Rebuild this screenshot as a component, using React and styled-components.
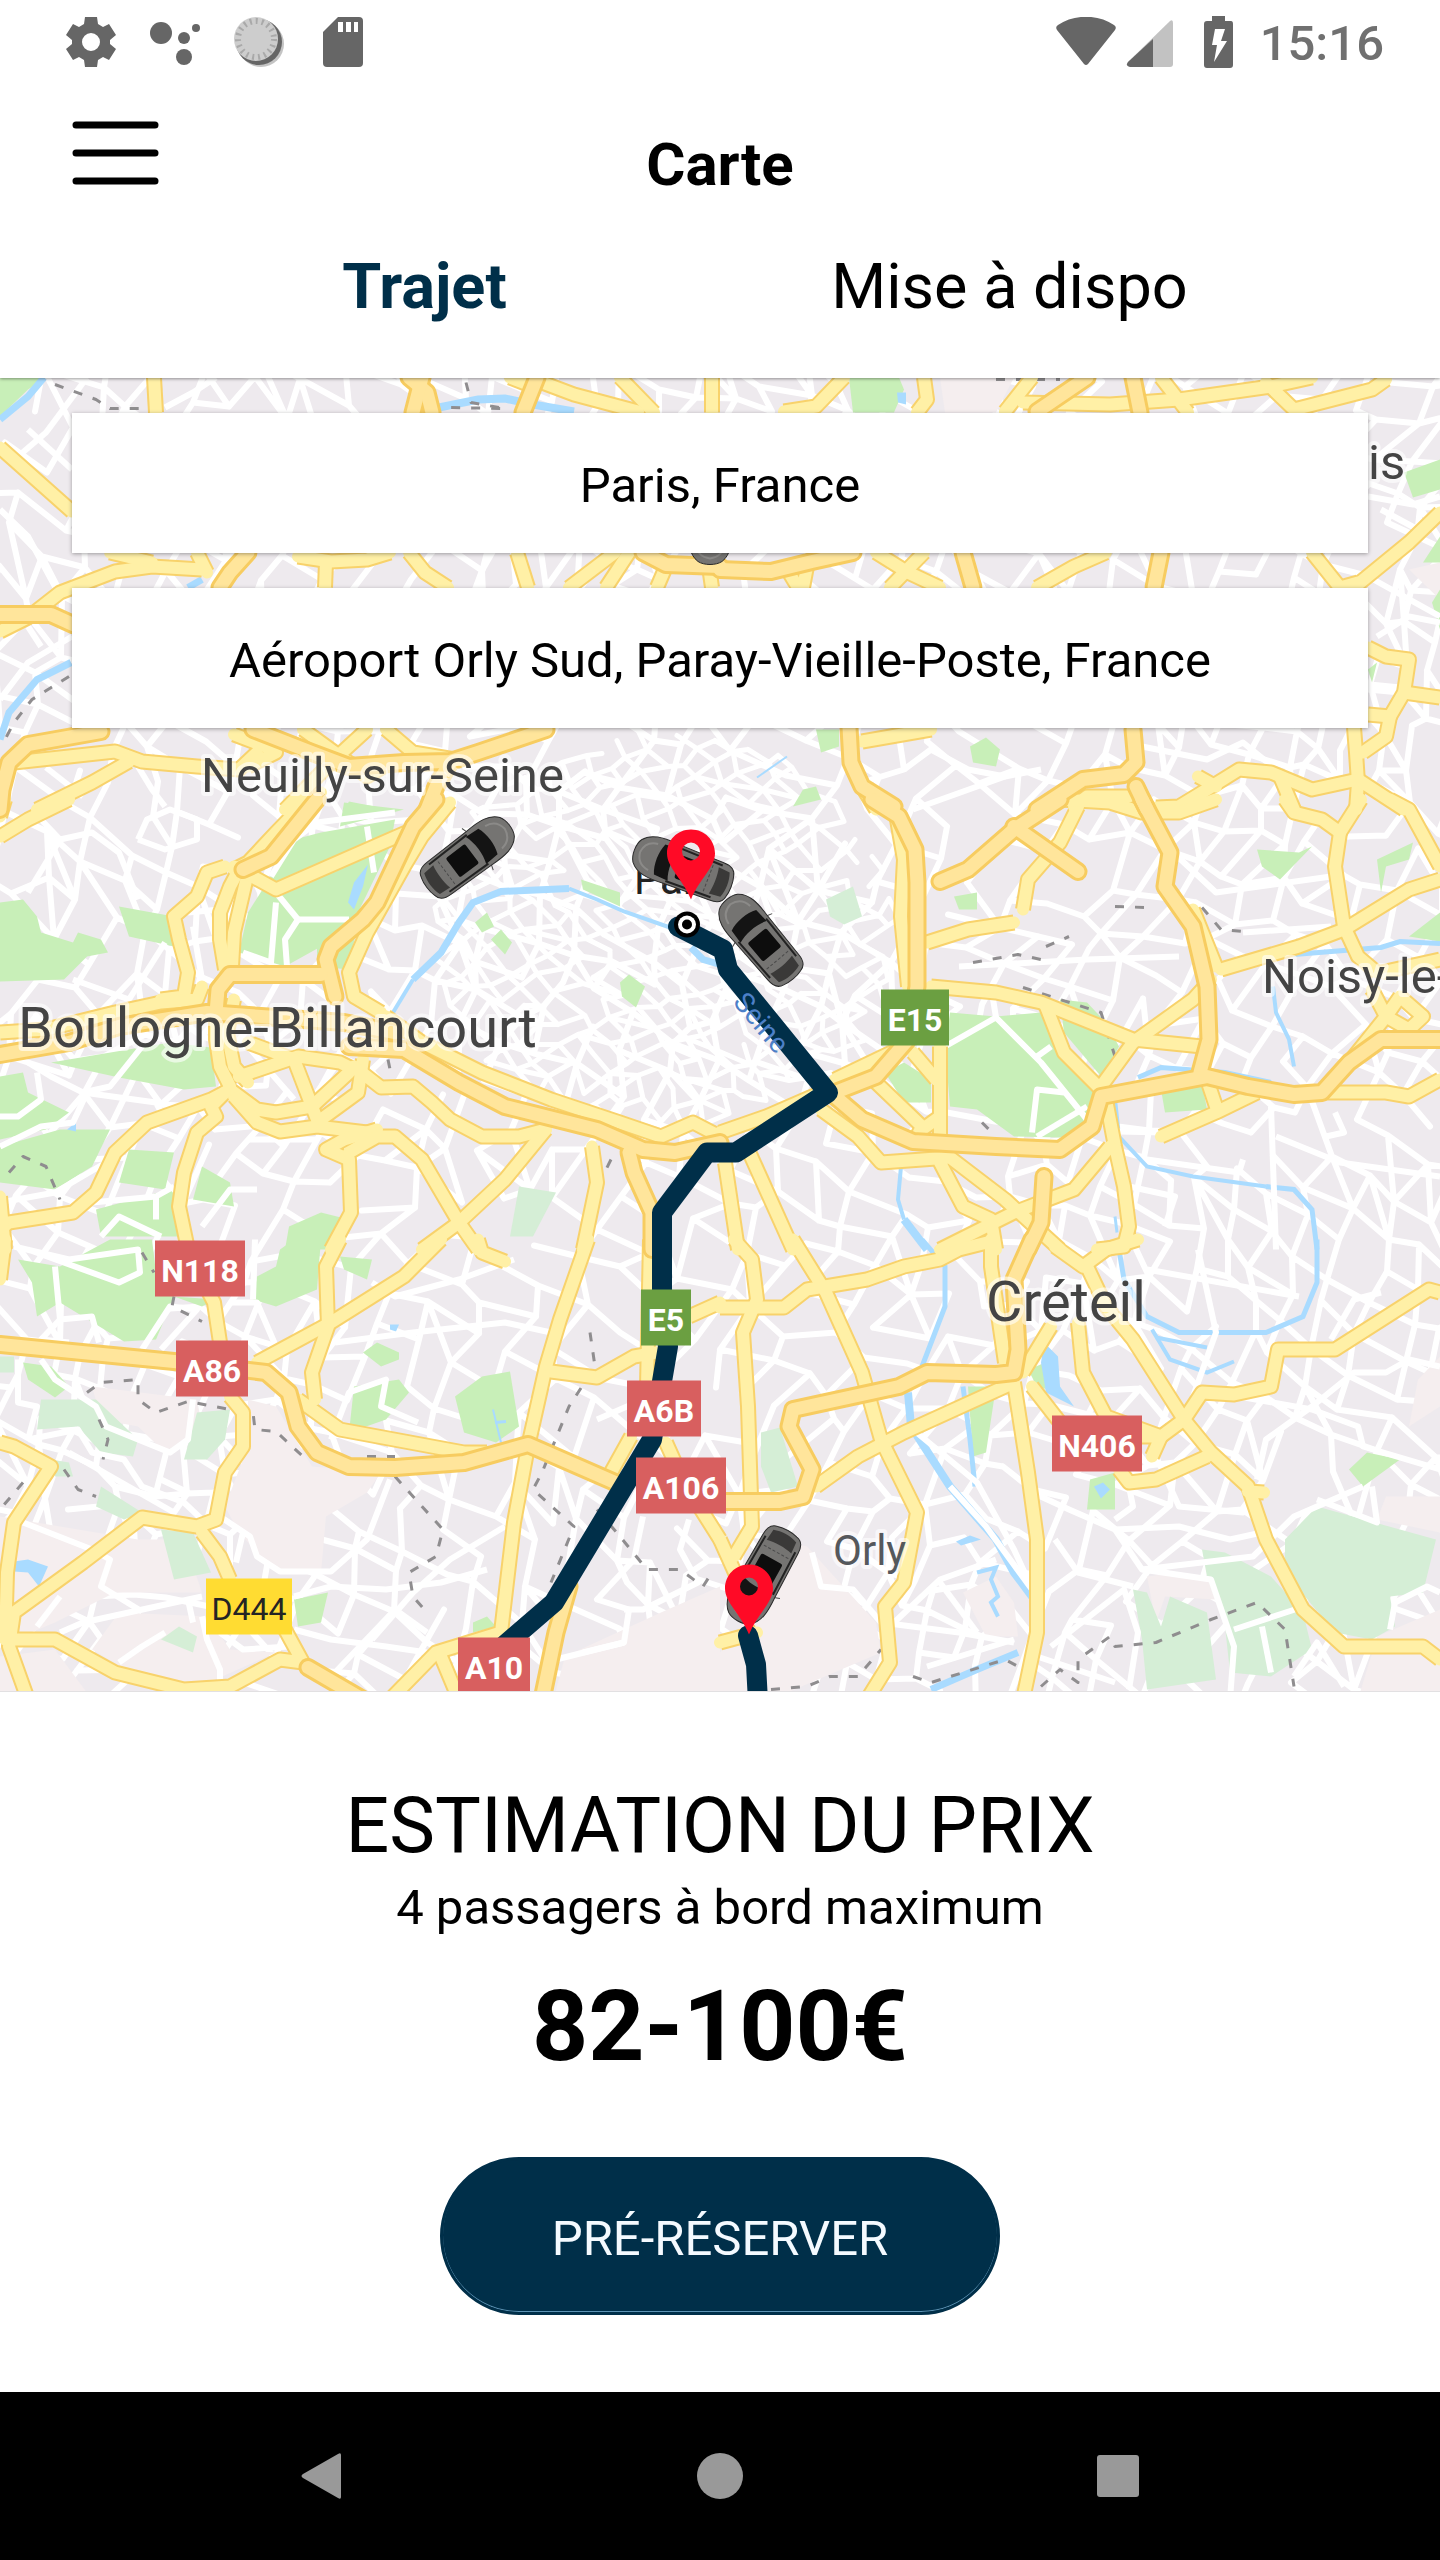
import React, { useState } from "react";
import styled, { createGlobalStyle } from "styled-components";

const NAVY = "#002f49";

// The map is cut in six tiles, every tile has its own origin and its own drawing units
const TILE_SCALE_X = 720 / 1568;
const TILE_SCALE_Y = 1 / 3;

const tiles = [
    {
        x: 0,
        y: 370,
        zones: [],
        parks: ["0,24 100,24 60,60 0,140", "760,1295 850,1320 750,1320"],
        meadows: [],
        lakes: [],
        rivers: [
            { w: 8, d: "955,115 1040,90 1100,88 1160,105 1250,125" },
            { w: 7, d: "95,24 60,80 0,150" },
            { w: 7, d: "155,880 80,930 20,1030 0,1110" },
            { w: 7, d: "440,630 410,655" },
        ],
        rails: [
            "120,45 210,90 240,118 330,118",
            "1015,40 1025,100 1100,118 970,115",
            "150,920 70,990 30,1060 10,1110",
        ],
        streets: [
            "360,115 420,70 470,24",
            "190,24 100,190 40,260",
            "0,420 60,500 120,650",
            "60,180 156,300",
            "0,990 60,880 156,800",
            "60,770 90,830",
            "1040,655 1060,550",
            "300,1190 330,1260 360,1310",
            "100,1195 180,1280",
        ],
        roads: [
            "335,24 340,130",
            "0,235 156,425",
            "0,785 60,745 130,670 250,605 330,590 440,600",
            "240,550 330,580",
            "430,550 450,610",
            "650,560 720,575 800,570 850,550",
            "710,580 708,655",
            "890,550 925,610 975,655",
            "1125,550 1150,655",
            "1340,550 1240,655",
            "1370,550 1320,655",
            "1450,590 1430,655",
            "1545,590 1550,655",
            "1110,24 1150,45",
            "1180,40 1250,75 1390,125",
            "1350,24 1425,128",
            "1550,24 1550,128",
            "30,1180 150,1160 250,1145 310,1175 430,1190 520,1200 560,1150",
            "80,1320 200,1240 280,1175",
            "510,1095 580,1130 600,1150 540,1190",
            "660,1080 770,1190",
            "800,1080 720,1180 620,1320",
            "700,1270 670,1320",
            "840,1080 900,1150 990,1170",
            "850,1180 800,1220 760,1180",
        ],
        motorways: [
            "0,735 110,735 160,765",
            "540,550 500,610 480,655",
            "1400,550 1450,585 1568,590",
            "890,24 930,70 940,128",
            "920,24 900,128",
            "1170,24 1140,128",
            "220,1085 60,1125 20,1180 5,1260 0,1320",
            "550,1080 680,1150 760,1190 880,1180 980,1175 1040,1150 1190,1080",
            "980,1180 950,1250 930,1320",
        ],
    },
    {
        x: 720,
        y: 370,
        zones: ["480,24 640,24 600,128 490,128", "1500,600 1568,580 1568,690"],
        parks: [
            "280,24 390,24 400,60 380,128 290,128",
            "1490,310 1568,270 1568,360 1510,385",
            "1530,580 1568,500 1568,580",
            "1411,900 1430,880 1420,940",
            "1550,700 1568,660 1568,780",
            "210,1080 260,1080 260,1130 220,1150",
            "545,1130 580,1105 610,1140 600,1190 550,1180",
            "160,1310 180,1260 210,1250 220,1290",
        ],
        meadows: [],
        lakes: ["385,70 405,70 405,105 388,100"],
        rivers: [{ w: 2, d: "80,1225 145,1160" }],
        rails: ["600,30 740,30"],
        streets: [
            "1411,380 1510,405 1568,380",
            "1411,960 1480,970",
            "1440,420 1520,480",
            "1411,620 1568,740",
            "1430,800 1500,740 1568,760",
            "390,1100 400,1200 310,1240",
            "400,1200 460,1140 540,1200 620,1220 700,1200",
            "620,1220 420,1320",
            "920,1130 1060,1170 1140,1120 1210,1200",
        ],
        roads: [
            "270,24 210,110 140,125",
            "445,24 450,90 430,128",
            "680,24 620,125",
            "660,100 850,105 1000,90 1200,50 1290,24",
            "960,24 1020,128",
            "1190,40 1250,120 1420,60 1450,30",
            "1568,430 1500,520 1380,655",
            "1290,550 1350,655 1390,640",
            "1411,835 1450,860 1500,870 1490,970 1460,1040 1411,1035",
            "1490,970 1568,985",
            "1460,1040 1450,1100 1400,1150",
            "1380,1075 1385,1150 1390,1240 1385,1320",
            "150,610 170,655",
            "190,590 180,655",
            "340,550 410,610 480,655",
            "445,550 370,655",
            "840,550 770,590 690,655",
            "310,1115 460,1080",
            "290,1200 310,1250 340,1320",
            "770,1310 800,1280 890,1280",
            "950,1315 1000,1310 1050,1270 1130,1200 1200,1210 1290,1260 1390,1230 1490,1320",
            "1040,1220 1080,1250",
            "1220,1220 1250,1320",
        ],
        motorways: [
            "800,24 690,125",
            "900,24 915,128",
            "0,600 110,605 200,575 290,550",
            "530,550 550,655",
            "960,550 945,655",
            "280,1075 285,1180 310,1250 380,1310",
            "900,1080 905,1180 880,1215 790,1230 690,1320",
            "905,1250 930,1320",
        ],
    },
    {
        x: 0,
        y: 800,
        zones: [],
        parks: [
            "0,310 50,300 80,350 90,400 160,430 170,400 220,420 235,460 190,470 140,540 0,545",
            "260,320 380,350 380,440 280,410",
            "540,340 640,120 700,100 860,60 850,140 780,340 700,440 620,500 520,460",
            "690,400 780,360 760,510 690,500",
            "750,10 880,30 740,80",
            "110,790 370,730 460,745 470,860 400,870 260,835",
            "0,830 50,820 60,880 150,940 100,990 0,1020",
            "0,1040 130,990 240,990 200,1100 120,1170 0,1150",
            "260,1150 280,1050 380,1060 360,1170",
            "440,1100 500,1150 510,1220 420,1200",
            "210,1230 370,1170 390,1200 400,1310 220,1310",
            "1265,240 1350,280 1350,320 1270,270",
            "1035,370 1060,340 1075,380 1050,400",
            "1070,420 1090,390 1115,430 1100,465",
            "1350,550 1370,525 1405,560 1385,625 1355,590",
            "620,1350 630,1280 700,1240 760,1260 740,1350",
        ],
        meadows: ["1130,1160 1210,1180 1160,1310 1110,1310"],
        lakes: ["757,310 770,250 802,195 790,260 770,330", "145,990 165,970 165,995"],
        rivers: [
            { w: 4, d: "855,640 900,540" },
            { w: 7, d: "900,540 960,460 1000,370 1030,310 1090,275 1240,268" },
            { w: 4, d: "1240,268 1300,300 1360,335 1460,385" },
            { w: 7, d: "1505,445 1530,480 1568,495" },
        ],
        rails: ["20,1120 50,1070 100,1100 130,1200", "845,780 850,810", "1330,1080 1320,1110"],
        streets: [
            "590,230 640,120 690,70 860,40",
            "600,280 650,360 620,420 625,500",
            "650,360 760,360",
            "800,80 815,220",
            "530,460 590,490 600,310",
            "160,540 280,600 360,430",
            "60,790 110,830 180,880 240,860 310,740",
            "180,880 340,910 360,960",
            "0,950 40,950 90,900 80,820",
            "0,1040 90,980 160,970 190,880",
            "0,1210 120,1180 230,1090",
            "200,1210 340,1190 380,1160",
            "340,1190 340,1260",
            "220,1310 260,1250 350,1310",
            "440,1280 500,1170 560,1170",
            "540,1020 690,1020",
            "540,740 640,900",
            "740,780 690,880",
            "410,340 480,330",
            "420,380 440,540",
            "60,280 130,120 90,60",
            "130,120 200,100 260,160 300,300",
            "300,120 320,60 370,30 430,60 430,120 360,150 300,120",
        ],
        roads: [
            "0,110 60,60 150,0",
            "0,50 10,0",
            "670,0 600,100 540,190 510,210",
            "520,210 500,260 480,340 480,420 490,510",
            "540,220 510,400 505,500",
            "490,200 450,220 430,290 380,350 390,420 410,520 400,590 350,600",
            "510,200 600,270 850,120 900,90",
            "980,10 920,110 880,200 800,400 760,520 770,590 830,640",
            "440,560 430,600 350,610 250,640 100,690 0,700",
            "470,640 470,720 480,800 500,860",
            "510,600 495,700 510,800 540,850",
            "520,830 650,770 740,790 770,810",
            "500,870 560,930 600,940 680,920 760,820",
            "510,890 560,970 610,995 690,980 800,1000",
            "640,780 690,960",
            "540,730 640,780",
            "790,780 780,880 700,960",
            "840,650 920,730 1050,820 1200,900 1350,970 1440,1010 1510,970 1568,1010",
            "770,800 830,865 900,860 940,910 980,960 1050,1010 1130,1010 1190,990",
            "1190,990 1100,1140 1000,1270 920,1350",
            "820,990 750,1020 710,1050 760,1080 765,1240 720,1350",
            "760,1060 820,1010 860,1010 920,1080 1000,1270 1040,1350",
            "500,870 460,900 320,970 250,1060 210,1180 160,1240 20,1270 0,1290",
            "490,880 460,920 470,950 430,1000 400,1120 390,1220 410,1350",
            "0,1190 10,1350",
            "1290,1040 1300,1150 1270,1350",
        ],
        motorways: [
            "690,0 590,170 530,210",
            "950,0 900,80 820,310 790,360 720,440 710,480 730,590",
            "470,640 475,570 500,525 700,525",
            "0,765 150,730 260,680 450,640 600,655 750,670 860,700",
            "760,740 880,750 1000,850 1100,920 1300,990 1400,1050 1470,1060 1568,1030",
            "1370,1060 1380,1120 1420,1240 1420,1350",
        ],
    },
    {
        x: 720,
        y: 800,
        zones: [],
        parks: [
            "500,640 600,650 700,640 750,760 830,880 800,980 740,1015 640,1010 560,930 500,920 490,740",
            "360,820 400,790 460,840 460,910 400,910",
            "740,600 800,610 840,670 870,740 830,830 750,700",
            "510,290 560,280 560,330 520,330",
            "1170,150 1260,160 1290,140 1220,240 1180,200",
            "1430,180 1510,130 1500,180 1450,200 1440,280",
            "1500,410 1568,340 1568,425",
            "960,870 1050,850 1060,930 970,940",
        ],
        meadows: ["230,300 290,260 310,350 270,375 240,350"],
        lakes: [],
        rivers: [
            { w: 5, d: "1250,465 1440,445 1480,425 1568,432" },
            { w: 5, d: "910,835 960,805 1100,820 1200,850" },
            { w: 4, d: "1205,560 1210,640 1240,720 1250,800" },
            { w: 4, d: "860,900 870,1010 930,1100 1030,1130 1190,1160" },
            { w: 5, d: "1190,1160 1250,1170 1290,1230 1300,1350" },
            { w: 4, d: "395,1100 388,1200 400,1260" },
            { w: 8, d: "400,1260 450,1350" },
            { w: 3, d: "860,1250 865,1300" },
        ],
        rails: [
            "860,320 930,325",
            "1050,325 1090,390 1140,395",
            "660,565 740,600 830,640 860,770 830,840",
            "710,440 760,410",
            "550,490 650,465 700,480",
            "570,970 600,1010",
        ],
        streets: [
            "490,740 600,655 700,790 800,960",
            "600,655 590,560",
            "690,770 720,740",
            "680,1000 690,870 750,880",
            "690,1010 800,920",
            "870,995 970,1000",
            "930,1080 1130,1120 1140,1080",
            "1200,920 1210,1350",
            "1340,940 1360,1000 1320,1010",
            "980,150 1080,280 1330,230",
            "1140,400 1330,380",
            "520,500 800,480 1000,470",
            "1210,1010 1350,1090 1568,1130",
            "890,1160 990,1190 970,1280",
        ],
        roads: [
            "385,60 400,180 395,350 410,560",
            "780,20 740,130 670,240 660,330",
            "450,430 540,390 640,370",
            "740,0 850,10 920,40 1000,40 1080,0",
            "1230,0 1250,40 1310,60 1350,100 1395,0",
            "1350,100 1340,200 1360,380 1390,470 1430,520",
            "1460,0 1500,30 1568,200",
            "1090,510 1260,440 1360,390 1500,270 1568,240",
            "460,560 600,580 700,610 900,720 1050,740",
            "1070,540 1030,600 900,730 830,860",
            "1030,330 1080,500",
            "710,620 750,760 830,870",
            "1300,880 1450,880 1500,890 1568,840",
            "480,740 480,1010",
            "420,760 470,840",
            "340,850 440,980 430,1010",
            "440,990 480,950",
            "250,840 400,740",
            "840,900 860,1040 880,1160 890,1280 880,1340 820,1350",
            "850,1040 770,1170 640,1240 480,1350",
            "220,930 300,1010 350,1090 500,1075 620,1200 740,1350",
            "480,1090 530,1220 590,1260 600,1350",
            "1060,840 1080,920",
            "960,1010 1080,940 1170,880",
            "0,1000 100,950 250,860",
            "10,1090 40,1350",
            "60,1050 160,1350",
            "1370,790 1450,650 1420,570",
            "1480,590 1450,650 1500,690 1530,650 1480,590",
            "1440,520 1568,480",
        ],
        motorways: [
            "330,0 390,50 425,150 430,250 430,560 410,720 340,830 250,880",
            "740,0 640,90 540,210 480,245",
            "640,80 780,215",
            "920,0 980,160 970,260 1030,380 1060,560 1065,720 1045,820",
            "1568,720 1440,720 1370,790 1310,880 1250,885 1150,860 1060,830 830,890 810,980 740,1050 600,1040 420,1025 310,960 250,890",
            "705,1130 700,1270 670,1350",
        ],
    },
    {
        x: 0,
        y: 1240,
        zones: [
            "540,480 600,500 680,680 830,700 800,760 710,830 700,1000 600,1000 520,880 490,800 540,620",
            "0,830 300,900 400,900 440,1060 250,1060 120,1150 30,1200 0,1200",
            "200,440 430,480 440,560 360,640 300,560 220,540",
            "260,1120 450,1130 500,1230 600,1240 420,1350 300,1310 200,1230",
            "0,1250 120,1230 200,1380 0,1380",
            "1210,1350 1230,1250 1440,1120 1568,1040 1568,1380 1210,1380",
        ],
        parks: [
            "40,60 130,80 240,0 330,0 340,100 380,170 340,300 270,305 130,190 80,230 70,130",
            "610,30 640,0 700,0 690,150 600,200 550,180 560,110 600,80",
            "740,50 810,60 800,120 750,90",
            "790,340 820,310 870,340 870,360 830,380",
            "770,440 870,420 890,460 840,540 760,580",
            "990,470 1050,410 1110,395 1130,560 1080,610 1010,580",
            "50,370 110,380 150,440 120,475 60,420",
            "640,1080 715,1060 700,1150 650,1160",
            "1030,1150 1060,1130 1080,1160 1030,1180",
            "380,170 470,180 440,200",
        ],
        meadows: [
            "0,350 30,350 30,400 0,400",
            "90,480 210,480 300,600 290,650 220,640 170,560 80,570",
            "430,520 500,510 490,600 450,660 400,660",
            "220,740 310,820 270,840 210,800",
            "350,870 420,880 460,1000 380,1020",
            "350,1200 390,1160 430,1190 420,1240",
            "110,660 150,670 160,710 120,710",
        ],
        lakes: ["30,965 60,960 105,980 85,1040 60,1000 30,995", "850,255 868,255 862,275 850,270"],
        rivers: [
            { w: 2, d: "1073,510 1090,610" },
            { w: 3, d: "1078,548 1102,545" },
        ],
        rails: [
            "310,40 335,100",
            "380,170 375,200 440,245",
            "190,460 220,430 300,420 300,480 340,520 410,485 500,510 550,520 555,570 600,575 660,650",
            "215,540 235,600 225,660",
            "140,690 170,750 210,770",
            "50,730 0,810",
            "800,650 860,650",
            "860,710 920,800 965,870 950,950 890,1000 900,1070 930,1120",
            "1285,280 1295,380 1240,500 1180,700 1160,750 1250,860 1200,1030",
            "1300,810 1350,890 1410,990 1480,990 1530,1040 1550,1000",
        ],
        streets: [
            "30,20 150,60 300,30 305,100 260,130 60,30",
            "120,80 130,240 200,230 215,310",
            "130,240 90,300 150,310",
            "90,360 120,420 210,500 230,560 300,600 370,640 410,600 420,480",
            "60,600 170,570 200,640 270,660 310,740 400,790 440,840",
            "150,640 380,820 410,760 350,720",
            "40,360 40,490 80,500 60,600",
            "50,850 200,930 240,960 220,1040 310,1115",
            "80,1160 130,1070",
            "130,1180 180,1150 440,1070",
            "310,330 370,200 430,210 350,330",
            "500,190 560,190 600,320",
            "555,0 550,180",
            "480,830 545,890 560,950 610,995 720,995 800,900 850,720",
            "515,970 530,880",
            "640,1070 720,1040 840,1050 960,1030 1060,990",
            "440,1130 450,1200 480,1290 480,1350",
            "480,1180 530,1230 630,1220",
            "260,1270 310,1220 360,1180",
            "410,1080 420,1150",
            "810,1200 900,1060 980,960 1100,860",
            "640,1170 720,1200 840,1220 930,1240",
            "730,1300 860,1110 930,1180",
            "1300,540 1400,480",
            "1400,830 1380,960 1300,1080 1370,1110 1360,1210 1270,1240",
            "1500,840 1480,930 1520,1030 1400,1110 1360,1110",
            "1210,1260 1360,1210",
            "720,600 760,460 840,420 830,500 910,550",
            "730,310 900,280 1100,250 1200,280",
            "810,130 860,170 1000,120 1120,60",
        ],
        roads: [
            "0,120 10,0",
            "440,120 465,190 480,310",
            "560,370 720,250 880,110 960,0",
            "740,0 710,80 715,260 680,400 685,480",
            "650,480 740,570 1010,640 1060,640",
            "1040,0 1050,40 1100,65",
            "1280,0 1220,240 1190,380 1150,620 1120,850 1090,1180 950,1240 850,1380",
            "1200,395 1300,415 1380,350 1430,340",
            "1415,0 1410,440",
            "1568,190 1500,230",
            "1375,590 1330,700",
            "500,470 530,520 530,620 490,700 470,840 430,860 310,835 180,970 30,1120 20,1220 60,1380",
            "0,610 30,620 110,680 30,850 15,1000 10,1200",
            "440,880 480,950 500,1020",
            "20,1200 120,1200 250,1300 400,1350 500,1340 610,1260 660,1270 620,1170",
            "960,1250 1000,1380",
            "1450,610 1490,730 1568,900",
        ],
        motorways: [
            "0,315 380,365 580,400 630,460 650,560 690,640 760,680 860,685 1010,670 1150,615 1340,730",
            "670,1285 790,1380",
            "1240,1040 1210,1180 1180,1380",
        ],
    },
    {
        x: 720,
        y: 1240,
        zones: [
            "130,900 190,920 340,1150 350,1240 110,1380 0,1380 0,1240 80,1100",
            "530,1060 600,1010 640,1090 650,1190 580,1190",
            "930,1010 1000,1000 1070,1020 1080,1080 970,1070 950,1150",
            "1450,770 1568,770 1568,880 1430,840",
            "1520,420 1568,350 1568,500 1500,560",
            "1430,1190 1568,1110 1568,1380 1390,1380",
        ],
        parks: [
            "540,440 600,440 580,640 550,650",
            "670,390 710,370 740,460 690,440",
            "805,720 860,700 860,810 800,810",
            "1370,690 1410,640 1480,660 1400,740",
        ],
        meadows: [
            "90,580 130,565 170,740 110,760 90,680",
            "1230,900 1300,800 1560,900 1530,1060 1460,1070 1470,1160 1420,1200 1340,1180 1230,1000",
            "1050,930 1100,940 1200,1010 1270,1120 1290,1230 1200,1310 1110,1300 1100,1160 1060,1010",
            "900,1050 930,1060 960,1160 980,1070 1060,1120 1080,1320 930,1350 920,1200",
        ],
        lakes: [
            "705,310 735,350 740,440 772,502 710,460 700,370",
            "815,740 835,730 850,750 830,778",
            "515,905 545,888 568,900 525,918",
        ],
        rivers: [
            { w: 5, d: "440,0 490,80 490,200 440,380" },
            { w: 8, d: "410,460 415,560 500,740 600,900 640,1000 680,1070" },
            { w: 5, d: "870,30 880,120 930,230 1000,280 1190,280 1270,230 1300,130 1300,0" },
            { w: 4, d: "950,295 1060,325" },
            { w: 4, d: "940,270 980,360 1060,400 1120,365" },
            { w: 5, d: "530,440 545,600 555,740" },
            { w: 4, d: "560,1000 600,985 590,1020 605,1070 590,1090 605,1130" },
            { w: 7, d: "650,1240 560,1290 460,1350" },
        ],
        rails: [
            "110,1350 190,1340 240,1310 300,1310 350,1230",
            "420,1310 460,1330 620,1260 650,1280",
            "700,1340 740,1290 780,1330 780,1260 850,1190 860,1220 950,1210 1070,1140 1170,1090 1230,1170 1250,1340",
        ],
        streets: [
            "680,760 760,810 860,870 920,990 1070,1020 1120,1220 1110,1380",
            "860,870 1000,860 1110,900 1180,880",
            "920,990 1160,950 1250,830 1400,740",
            "1120,1170 1265,1105",
            "1180,1160 1200,1300",
            "720,1220 880,1050 910,1180 890,1350",
            "1170,720 1190,600 1290,500 1380,400 1450,400 1500,360 1568,380",
            "1130,470 1290,510 1390,560 1400,620 1568,690",
            "500,740 580,860 680,1050",
            "420,570 560,730 640,930 690,1080",
            "200,940 220,1040 290,1050 350,1150 520,1180 640,1210",
            "380,1150 480,1020 600,960",
            "480,1030 560,1180",
            "450,1280 640,1200",
            "690,1250 860,1330",
            "1250,1310 1300,1210 1360,1340",
            "1460,1170 1470,1090 1540,1040 1568,1060",
            "1300,780 1430,850 1420,740",
            "1030,470 1080,280 1040,30",
            "930,90 1260,170",
            "1330,300 1380,180 1440,160",
            "950,650 1000,800 1140,820 1160,780",
            "730,900 780,1000 900,1040",
            "860,840 900,800 890,740",
        ],
        roads: [
            "30,0 70,60 80,180 50,280 60,500 70,860 30,950",
            "160,0 230,160 310,400 350,600 430,820 400,1030 360,1100 370,1270 320,1380",
            "0,205 140,205 190,150 320,120 400,80 480,60 520,30 590,5",
            "590,0 590,80 620,370",
            "730,20 790,80 840,30 910,0",
            "640,430 400,580 300,650 210,740",
            "720,260 660,400",
            "640,430 670,700 690,900 690,1180 660,1380",
            "800,80 840,200 900,300 1010,540 1070,640 1150,740 1190,900 1270,1110 1360,1220 1530,1220 1568,1260",
            "780,250 790,400 840,530 960,590 1010,540",
            "680,440 740,550",
            "870,690 890,730 950,720 1060,650",
            "1010,540 1050,460 1120,465 1200,440 1215,330 1340,330 1545,150 1568,160",
            "0,900 20,960 40,1020",
            "0,1210 80,1180",
            "1150,755 1185,760",
            "920,590 960,590 940,650",
        ],
        motorways: [
            "680,0 640,120 650,330 640,400 600,405 450,400 390,440 160,510 150,560 200,690 180,770 130,785 0,785",
        ],
    },
];

const cars = [
    { x: 468, y: 857, angle: -37 },
    { x: 683, y: 869, angle: 201 },
    { x: 760, y: 940, angle: 230 },
    { x: 763, y: 1576, angle: 119 },
    { x: 710, y: 513, angle: 90 },
];

const pins = [
    { x: 691, y: 854 },
    { x: 749, y: 1589 },
];

const places = [
    { name: "Neuilly-sur-Seine", x: 201, y: 792, size: 49 },
    { name: "Boulogne-Billancourt", x: 18, y: 1047, size: 56 },
    { name: "Noisy-le-", x: 1262, y: 993, size: 49 },
    { name: "is", x: 1368, y: 479, size: 49 },
    { name: "Créteil", x: 986, y: 1321, size: 56 },
    { name: "Orly", x: 833, y: 1565, size: 42, color: "#55585c" },
    { name: "Paris", x: 634, y: 894, size: 42, color: "#222222" },
];

const shields = [
    { name: "E15", x: 881, y: 990, width: 68, kind: "euro" },
    { name: "N118", x: 155, y: 1241, width: 90, kind: "main" },
    { name: "A86", x: 176, y: 1341, width: 72, kind: "main" },
    { name: "E5", x: 641, y: 1290, width: 50, kind: "euro" },
    { name: "A6B", x: 627, y: 1381, width: 74, kind: "main" },
    { name: "A106", x: 636, y: 1458, width: 90, kind: "main" },
    { name: "N406", x: 1052, y: 1416, width: 90, kind: "main" },
    { name: "D444", x: 206, y: 1579, width: 86, kind: "local" },
    { name: "A10", x: 458, y: 1638, width: 72, kind: "main" },
];

const shieldColors = {
    main: { background: "#d85f5f", text: "#ffffff" },
    euro: { background: "#6b9f41", text: "#ffffff" },
    local: { background: "#ffdc32", text: "#242424" },
};

const toPoints = (tile, points) =>
    points
        .split(" ")
        .map((pair) => {
            const [x, y] = pair.split(",").map(Number);
            return `${Math.round(tile.x + x * TILE_SCALE_X)},${Math.round(tile.y + y * TILE_SCALE_Y)}`;
        })
        .join(" ");

// small streets: a shaken lattice, turned by `turn` degrees around its centre
const buildStreets = ({ cx, cy, rx, ry, step, turn, keep, seed, round }) => {
    let state = seed;
    const random = () => {
        state = (state * 16807) % 2147483647;
        return state / 2147483647;
    };
    const cos = Math.cos((turn * Math.PI) / 180);
    const sin = Math.sin((turn * Math.PI) / 180);
    const reach = Math.ceil(Math.hypot(rx, ry) / step);
    const nodes = [];
    for (let row = -reach; row <= reach; row += 1) {
        const line = [];
        for (let col = -reach; col <= reach; col += 1) {
            const u = (col + (random() - 0.5) * 0.65) * step;
            const v = (row + (random() - 0.5) * 0.65) * step;
            // slow bends keep the lattice from looking ruled
            const bendX = Math.sin(v / 90) * 22 + Math.sin(u / 140) * 18;
            const bendY = Math.sin(u / 110) * 24;
            line.push([cx + u * cos - v * sin + bendX, cy + u * sin + v * cos + bendY]);
        }
        nodes.push(line);
    }
    const inside = ([x, y]) => {
        const dx = (x - cx) / rx;
        const dy = (y - cy) / ry;
        return round ? dx * dx + dy * dy < 1 : Math.abs(dx) < 1 && Math.abs(dy) < 1;
    };
    const parts = [];
    const join = (a, b, chance) => {
        if (random() < chance && inside(a) && inside(b)) {
            parts.push(`M${a.map(Math.round).join(" ")}L${b.map(Math.round).join(" ")}`);
        }
    };
    for (let row = 0; row < nodes.length - 1; row += 1) {
        for (let col = 0; col < nodes.length - 1; col += 1) {
            join(nodes[row][col], nodes[row][col + 1], keep);
            join(nodes[row][col], nodes[row + 1][col], keep);
            join(nodes[row][col], nodes[row + 1][col + 1], 0.12);
        }
    }
    return parts.join("");
};

const suburbStreets = buildStreets({ cx: 720, cy: 1035, rx: 760, ry: 690, step: 38, turn: 24, keep: 0.74, seed: 71 });
const cityStreets = buildStreets({ cx: 665, cy: 930, rx: 240, ry: 200, step: 21, turn: -33, keep: 0.84, seed: 12, round: true });

const TileLines = ({ layer, ...rest }) =>
    tiles.map((tile) =>
        tile[layer].map((points) => <polyline key={tile.x + points} points={toPoints(tile, points)} {...rest} />)
    );

const TileAreas = ({ layer, ...rest }) =>
    tiles.map((tile) =>
        tile[layer].map((points) => <polygon key={tile.x + points} points={toPoints(tile, points)} {...rest} />)
    );

const Car = ({ x, y, angle }) => (
    <g transform={`translate(${x} ${y}) rotate(${angle})`}>
        <path d="M14-20l-2-6M14 20l-2 6" stroke="#4a4a4a" strokeWidth="1" />
        <path
            d="M-50-11C-49-17-44-20-36-20L14-21C30-22 42-21 49-12C53-6 53 6 49 12C42 21 30 22 14 21L-36 20C-44 20-49 17-50 11C-52 5-52-5-50-11Z"
            fill="#757472"
            stroke="#2a2a2a"
            strokeWidth="1"
        />
        <path d="M-36-17L12-18M-36 17L12 18" stroke="#222222" strokeWidth="2" fill="none" />
        <path d="M10-17L25-16C29-7 29 7 25 16L10 17C14 7 14-7 10-17Z" fill="#141414" />
        <path d="M-45-13L-33-14C-35-6-35 6-33 14L-45 13C-48 5-48-5-45-13Z" fill="#3a3938" />
        <rect x="-19" y="-12" width="24" height="24" rx="2" fill="#0d0d0d" />
        <path d="M-27-14V14" stroke="#4a4a4a" strokeDasharray="3 2" fill="none" />
        <path d="M32-14C40-13 45-8 46 0C45 8 40 13 32 14" stroke="#8b8a88" strokeWidth="2" fill="none" />
    </g>
);

const Pin = ({ x, y }) => (
    <path
        transform={`translate(${x} ${y})`}
        fill="#ff0a26"
        fillRule="evenodd"
        d="M0-24C14-24 24-13 24 0C24 14 8 26 0 46C-8 26-24 14-24 0C-24-13-14-24 0-24ZM0-11A9 9 0 1 0 0 7A9 9 0 1 0 0-11Z"
    />
);

const Shield = ({ name, x, y, width, kind }) => (
    <g>
        <rect x={x} y={y} width={width} height="56" fill={shieldColors[kind].background} />
        <ShieldText x={x + width / 2} y={y + 41} fill={shieldColors[kind].text} $bold={kind !== "local"}>
            {name}
        </ShieldText>
    </g>
);

const RouteMap = () => (
    <MapDrawing viewBox="0 378 1440 1314" preserveAspectRatio="xMidYMid slice" role="img" aria-label="Carte du trajet">
        <rect y="300" width="1440" height="1500" fill="#eeeaee" />
        <path d={suburbStreets} stroke="#ffffff" strokeWidth="6" strokeLinecap="round" fill="none" />
        <path d={cityStreets} stroke="#ffffff" strokeWidth="5" strokeLinecap="round" fill="none" />
        <TileAreas layer="zones" fill="#f5eeef" />
        <TileAreas layer="parks" fill="#c8efb8" />
        <TileAreas layer="meadows" fill="#d5eed6" />
        <TileAreas layer="lakes" fill="#a9dbff" />
        {tiles.map((tile) =>
            tile.rivers.map(({ w, d }) => (
                <polyline key={tile.x + d} points={toPoints(tile, d)} fill="none" stroke="#a9dbff" strokeWidth={w} />
            ))
        )}
        <g fill="none" strokeLinejoin="round">
            <TileLines layer="streets" stroke="#ffffff" strokeWidth="6" />
            <TileLines layer="rails" stroke="#8f8d8f" strokeWidth="3" strokeDasharray="9 11" />
            <TileLines layer="roads" stroke="#f8d26b" strokeWidth="16" />
            <TileLines layer="roads" stroke="#fff0a6" strokeWidth="12" strokeLinecap="round" />
            <TileLines layer="motorways" stroke="#f7cc60" strokeWidth="19" strokeLinecap="round" />
            <TileLines layer="motorways" stroke="#ffe59b" strokeWidth="13" strokeLinecap="round" />
            <polyline
                points="678,927 723,950 728,970 828,1093 736,1153 707,1153 662,1213 662,1290 668,1347 652,1440 554,1603 496,1653"
                stroke={NAVY}
                strokeWidth="20"
                strokeLinecap="round"
            />
            <polyline points="748,1636 756,1665 759,1720" stroke={NAVY} strokeWidth="20" strokeLinecap="round" />
        </g>
        {places.map(({ name, x, y, size, color }) => (
            <PlaceName key={name} x={x} y={y} fontSize={size} fill={color || "#444444"}>
                {name}
            </PlaceName>
        ))}
        <RiverName transform="translate(732 1003) rotate(50)">Seine</RiverName>
        {shields.map((shield) => (
            <Shield key={shield.name} {...shield} />
        ))}
        <circle cx="687" cy="925" r="13" fill="#000000" />
        <circle cx="687" cy="925" r="9" fill="#ffffff" />
        <circle cx="687" cy="925" r="5" fill="#000000" />
        {cars.map((car) => (
            <Car key={car.x} {...car} />
        ))}
        {pins.map((pin) => (
            <Pin key={pin.x} {...pin} />
        ))}
    </MapDrawing>
);

const StatusIcons = () => (
    <StatusGroup $gap="34px">
        <svg width="50" height="50" viewBox="0 0 50 50" fill="#666666">
            <path
                fillRule="evenodd"
                d="M19 0H31L32 7L37 10L43 7L50 18L44 23V27L50 32L43 43L37 40L32 43L31 50H19L18 43L13 40L7 43L0 32L6 27V23L0 18L7 7L13 10L18 7ZM25 16A9 9 0 1 0 25 34A9 9 0 1 0 25 16Z"
            />
        </svg>
        <svg width="50" height="50" viewBox="0 0 50 50" fill="#666666">
            <circle cx="11" cy="16" r="11" />
            <circle cx="34" cy="21" r="6" />
            <circle cx="46" cy="11" r="4" />
            <circle cx="34" cy="40" r="8" />
        </svg>
        <svg width="50" height="50" viewBox="0 0 50 50">
            <circle cx="27" cy="27" r="23" fill="#c4c4c4" />
            <circle cx="25" cy="25" r="23" fill="#666666" />
            <circle cx="22" cy="22" r="22" fill="#cdcdcd" />
            <circle cx="22" cy="22" r="18" fill="none" stroke="#a9a9a9" strokeWidth="6" strokeDasharray="2 4" />
        </svg>
        <svg width="50" height="50" viewBox="0 0 50 50">
            <path d="M20 0H41Q45 0 45 4V46Q45 50 41 50H9Q5 50 5 46V15Z" fill="#666666" />
            <path d="M20 5h5v10h-5zM28 5h5v10h-5zM36 5h4v10h-4z" fill="#ffffff" />
        </svg>
    </StatusGroup>
);

const SignalIcons = () => (
    <StatusGroup $gap="10px">
        <svg width="60" height="50" viewBox="0 0 60 50" fill="#666666">
            <path d="M1 13Q-1 10 2 8C18-3 42-3 58 8Q61 10 59 13L32 47Q30 49 28 47Z" />
        </svg>
        <svg width="48" height="50" viewBox="0 0 48 50">
            <path d="M44 4Q47 2 47 6V47Q47 50 44 50H4Q-1 49 2 45Z" fill="#c2c2c2" />
            <path d="M27 22V50H4Q-1 49 2 45Z" fill="#666666" />
        </svg>
        <BatteryIcon width="30" height="52" viewBox="0 0 30 52">
            <path d="M8 0H21V5H27Q29 5 29 8V49Q29 52 26 52H3Q0 52 0 49V8Q0 5 3 5H8Z" fill="#666666" />
            <path d="M11 13H21L17 25H23L10 46L13 29H8Z" fill="#ffffff" />
        </BatteryIcon>
        <Clock>15:16</Clock>
    </StatusGroup>
);

const tabs = ["Trajet", "Mise à dispo"];

const App = () => {
    const [activeTab, setActiveTab] = useState(tabs[0]);
    const [departure, setDeparture] = useState("Paris, France");
    const [arrival, setArrival] = useState("Aéroport Orly Sud, Paray-Vieille-Poste, France");

    return (
        <>
            <GlobalStyle />
            <Screen>
                <Header>
                    <StatusBar>
                        <StatusIcons />
                        <SignalIcons />
                    </StatusBar>
                    <TitleBar>
                        <MenuButton type="button" aria-label="Menu">
                            <svg width="88" height="64" viewBox="0 0 88 64" stroke="#000000" strokeWidth="7" strokeLinecap="round">
                                <path d="M4 4H83M4 32H83M4 60H83" />
                            </svg>
                        </MenuButton>
                        <Title>Carte</Title>
                    </TitleBar>
                    <Tabs>
                        {tabs.map((tab) => (
                            <Tab key={tab} type="button" $active={tab === activeTab} onClick={() => setActiveTab(tab)}>
                                {tab}
                            </Tab>
                        ))}
                    </Tabs>
                </Header>
                <MapArea>
                    <RouteMap />
                    <AddressForm>
                        <AddressInput
                            aria-label="Départ"
                            value={departure}
                            onChange={(e) => setDeparture(e.target.value)}
                        />
                        <AddressInput aria-label="Arrivée" value={arrival} onChange={(e) => setArrival(e.target.value)} />
                    </AddressForm>
                </MapArea>
                <Estimate>
                    <EstimateTitle>ESTIMATION DU PRIX</EstimateTitle>
                    <Passengers>4 passagers à bord maximum</Passengers>
                    <Price>82-100€</Price>
                    <BookButton type="button">PRÉ-RÉSERVER</BookButton>
                </Estimate>
                <NavBar>
                    <NavButton type="button" aria-label="Retour">
                        <svg width="48" height="48" viewBox="0 0 48 48" fill="#999999">
                            <path d="M5 22L40 2Q43 0 43 3V45Q43 48 40 46L5 26Q2 24 5 22Z" />
                        </svg>
                    </NavButton>
                    <NavButton type="button" aria-label="Accueil">
                        <svg width="48" height="48" viewBox="0 0 48 48" fill="#999999">
                            <circle cx="24" cy="24" r="23" />
                        </svg>
                    </NavButton>
                    <NavButton type="button" aria-label="Applications récentes">
                        <svg width="48" height="48" viewBox="0 0 48 48" fill="#999999">
                            <rect x="3" y="3" width="42" height="42" rx="3" />
                        </svg>
                    </NavButton>
                </NavBar>
            </Screen>
        </>
    );
};

export default App;

const GlobalStyle = createGlobalStyle`
    * {
        box-sizing: border-box;
    }

    body {
        margin: 0;
        background-color: #ffffff;
        color: #000000;
        font-family: Roboto, "Liberation Sans", sans-serif;
    }

    button {
        border: none;
        padding: 0;
        background: none;
        color: inherit;
        font-family: inherit;
        cursor: pointer;
    }

    svg {
        display: block;
    }
`;

const Screen = styled.div`
    display: flex;
    flex-direction: column;
    min-height: 100vh;
`;

const Header = styled.header`
    position: relative;
    z-index: 1;
    padding-bottom: 53px;
    background-color: #ffffff;
    box-shadow: 0 1px 3px rgba(0, 0, 0, 0.4);
`;

const StatusBar = styled.div`
    display: flex;
    align-items: center;
    justify-content: space-between;
    height: 84px;
    padding: 0 56px 0 66px;
`;

const StatusGroup = styled.div`
    display: flex;
    align-items: center;
    gap: ${({ $gap }) => $gap};
`;

const BatteryIcon = styled.svg`
    margin: 0 16px 0 20px;
`;

const Clock = styled.span`
    padding-top: 4px;
    color: #707070;
    font-size: 49px;
    font-weight: 500;
    line-height: 58px;
`;

const TitleBar = styled.div`
    display: grid;
    grid-template-columns: 1fr auto 1fr;
    align-items: start;
    padding: 37px 72px 0;
`;

const MenuButton = styled.button`
    justify-self: start;
`;

const Title = styled.h1`
    margin: 8px 0 0;
    font-size: 60px;
    font-weight: 700;
    line-height: 72px;
`;

const Tabs = styled.nav`
    display: grid;
    grid-template-columns: 1fr 1fr;
    margin-top: 48px;
    padding: 0 138px 0 132px;
`;

const Tab = styled.button`
    color: ${({ $active }) => ($active ? NAVY : "#000000")};
    font-size: 63px;
    font-weight: ${({ $active }) => ($active ? 700 : 400)};
    line-height: 76px;
`;

const MapArea = styled.main`
    position: relative;
    flex: 1;
    min-height: 900px;
    overflow: hidden;
    border-bottom: 1px solid #e2e0e2;
`;

const MapDrawing = styled.svg`
    position: absolute;
    inset: 0;
    width: 100%;
    height: 100%;
`;

const PlaceName = styled.text`
    paint-order: stroke;
    stroke: rgba(255, 255, 255, 0.6);
    stroke-width: 8px;
    stroke-linejoin: round;
`;

const RiverName = styled.text`
    fill: #4d80c8;
    font-size: 28px;
`;

const ShieldText = styled.text`
    font-size: 32px;
    font-weight: ${({ $bold }) => ($bold ? 700 : 400)};
    text-anchor: middle;
`;

const AddressForm = styled.form`
    position: relative;
    display: flex;
    flex-direction: column;
    gap: 35px;
    padding: 35px 72px;
`;

const AddressInput = styled.input`
    width: 100%;
    height: 140px;
    border: none;
    padding: 4px 24px 0;
    background-color: #ffffff;
    box-shadow: 0 1px 4px rgba(0, 0, 0, 0.35);
    color: #000000;
    font-family: inherit;
    font-size: 49px;
    text-align: center;
`;

const Estimate = styled.section`
    display: flex;
    flex-direction: column;
    align-items: center;
    padding: 89px 72px 77px;
    text-align: center;
`;

const EstimateTitle = styled.h2`
    margin: 0;
    font-size: 77px;
    font-weight: 400;
    line-height: 90px;
`;

const Passengers = styled.p`
    margin: 8px 0 32px;
    font-size: 49px;
    line-height: 58px;
`;

const Price = styled.p`
    margin: 0 0 72px;
    font-size: 98px;
    font-weight: 700;
    line-height: 116px;
`;

const BookButton = styled.button`
    && {
        width: 560px;
        height: 158px;
        border: 3px solid ${NAVY};
        border-radius: 79px;
        padding-top: 4px;
        background-color: ${NAVY};
        box-shadow: inset 0 -1px 0 #5d93b4;
        color: #f4faff;
        font-size: 49px;
    }
`;

const NavBar = styled.footer`
    display: grid;
    grid-template-columns: repeat(3, 1fr);
    height: 168px;
    padding: 0 123px;
    background-color: #000000;
`;

const NavButton = styled.button`
    display: flex;
    align-items: center;
    justify-content: center;
`;
